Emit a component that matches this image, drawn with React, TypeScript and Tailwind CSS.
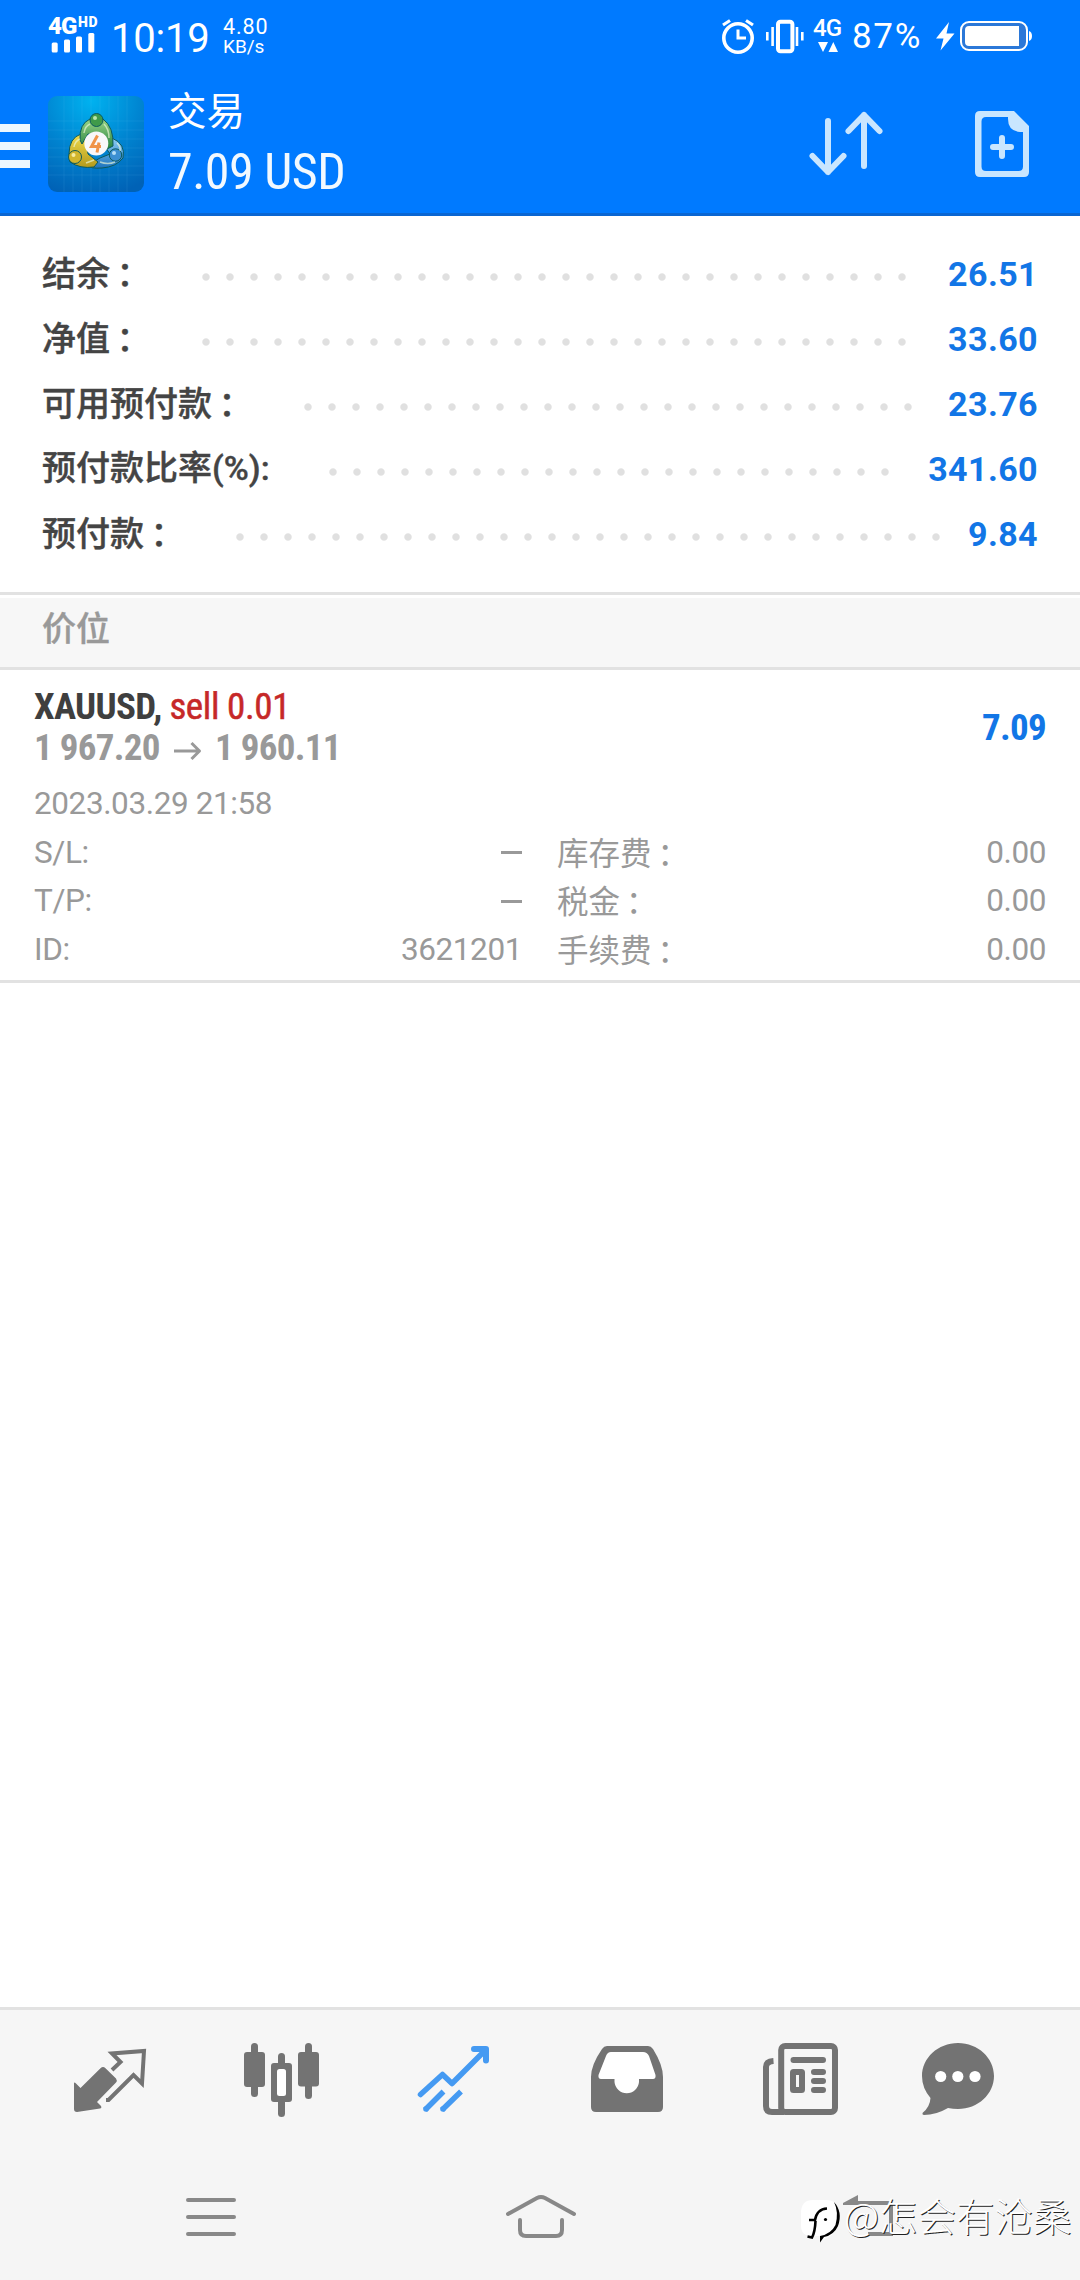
import React from "react";

const SANS = "font-['Roboto','Noto_Sans_CJK_SC',sans-serif]";
const COND = "font-['Roboto','Noto_Sans_CJK_SC',sans-serif] [font-stretch:75%]";

function Label({ text }: { text: string }) {
  const wide = text.endsWith("：");
  return (
    <>
      {wide ? text.slice(0, -1) : text}
      {wide && <span className="relative -left-[2px] top-[2px] font-['Noto_Sans_CJK_TC',sans-serif]">：</span>}
    </>
  );
}

function StatusBar() {
  return (
    <div className="flex h-[72px] items-start text-white">
      <div className="ml-[48px] mt-[13px] w-[54px]">
        <div className="flex h-[24px] items-start">
          <span className="w-[30px] text-[24px] font-black leading-[26px] tracking-[-1px]">4G</span>
          <span className="text-[14px] font-black leading-[18px] tracking-[0.6px]">HD</span>
        </div>
        <svg className="block -mt-[5px]" width="54" height="22" viewBox="48 32 54 22" fill="currentColor">
          <rect x="51.7" y="42.5" width="6" height="10" rx="1.5" />
          <rect x="64" y="39.5" width="6" height="13" rx="1.5" />
          <rect x="76" y="36.5" width="6" height="16" rx="1.5" />
          <rect x="88.3" y="33" width="6" height="19.5" rx="1.5" />
        </svg>
      </div>
      <div className="ml-[9px] mt-[14px] w-[112px] text-[40px] leading-[50px] tracking-[-0.2px]">10:19</div>
      <div className="mt-[16px] w-[60px]">
        <div className="text-[21.5px] leading-[21px] tracking-[0.9px]">4.80</div>
        <div className="text-[19px] leading-[20px]">KB/s</div>
      </div>
      <svg className="ml-auto mt-[14px]" width="86" height="44" viewBox="720 14 86 44" fill="none" stroke="currentColor">
        <circle cx="738" cy="38" r="14.2" strokeWidth="3.6" />
        <path d="M738 29.5V38H746" strokeWidth="3" />
        <path d="M723 25L730 20.5M753 25L746 20.5" strokeWidth="3.2" />
        <rect x="778" y="21.8" width="14.4" height="29.4" rx="2.5" strokeWidth="4" />
        <path d="M767.3 32V40.500M772.6 27V46M797 27V46M802.300 32V40.500" strokeWidth="2.600" />
      </svg>
      <div className="ml-[7px] mt-[18px] w-[34px]">
        <div className="text-[24px] font-medium leading-[20px] tracking-[-1px]">4G</div>
        <svg className="block" width="34" height="16" viewBox="813 38 34 16" fill="currentColor">
          <path d="M818 42H828L823 52ZM828.500 52H838L833.300 42Z" />
        </svg>
      </div>
      <div className="ml-[5px] mt-[16px] w-[82px] text-[35px] leading-[42px] tracking-[1.7px]">87%</div>
      <svg className="mr-[44px] mt-[14px]" width="102" height="44" viewBox="934 14 102 44">
        <path d="M949 22L936 38.500H943.500L940.500 50.500L954.500 33.500H946.500Z" fill="#fff" />
        <rect x="961" y="22" width="66" height="28" rx="8" fill="#2b78d8" stroke="#fff" strokeWidth="2" />
        <path d="M969 26H1019V46H969Q965 46 965 42V30Q965 26 969 26Z" fill="#fff" />
        <path d="M1029 31Q1032 32 1032 36T1029 41Z" fill="#fff" />
      </svg>
    </div>
  );
}

function Logo() {
  return (
    <svg className="ml-[18px]" width="96" height="96" viewBox="0 0 96 96">
      <defs>
        <radialGradient id="bg" cx="0.45" cy="0.05" r="1">
          <stop offset="0" stopColor="#00b2f0" />
          <stop offset="0.5" stopColor="#0086d2" />
          <stop offset="1" stopColor="#0062b6" />
        </radialGradient>
        <linearGradient id="gr" x1="0" y1="0" x2="0" y2="1">
          <stop offset="0" stopColor="#9ad486" />
          <stop offset="1" stopColor="#1f7f3c" />
        </linearGradient>
        <linearGradient id="ye" x1="0" y1="0" x2="0" y2="1">
          <stop offset="0" stopColor="#f0dc4e" />
          <stop offset="1" stopColor="#b39a1c" />
        </linearGradient>
        <linearGradient id="bl" x1="0" y1="0" x2="0" y2="1">
          <stop offset="0" stopColor="#8ccdf5" />
          <stop offset="1" stopColor="#1d74bd" />
        </linearGradient>
      </defs>
      <rect width="96" height="96" rx="9" fill="url(#bg)" />
      <path
        d="M16 0V96M25 0V96M34 0V96M43 0V96M52 0V96M61 0V96M70 0V96M79 0V96M0 25H96M0 34H96M0 43H96M0 52H96M0 61H96M0 70H96M0 79H96"
        stroke="#7fd4ff"
        strokeOpacity="0.12"
        strokeWidth="0.8"
      />
      <g stroke="#0b5a5d" strokeWidth="1">
        <path d="M40 69Q42 73 54 72Q68 71 75 62Q78 48 64 42L58 52L62 58L52 62Z" fill="url(#bl)" />
        <path d="M33 38Q21 42 21 58L22 66Q32 73 46 71L50 66L40 58L38 42Z" fill="url(#ye)" />
        <path d="M32 44Q31 28 42 23H55Q66 31 65 50L57 54L52 38H40L34 48Z" fill="url(#gr)" />
        <circle cx="48.500" cy="24" r="6.500" fill="#3f9a4a" />
        <circle cx="27" cy="61" r="6.500" fill="#d2b52c" />
        <circle cx="67.500" cy="59" r="6.200" fill="#3c8fd2" />
      </g>
      <path d="M36 37Q37 30 42 28M56 28Q61 33 61 42M26 51Q27 45 32 43M69 47Q73 51 72 55M46 64L38 67M52 66Q60 69 67 66" stroke="#eef9d8" strokeOpacity="0.65" strokeWidth="1.500" fill="none" />
      <circle cx="47" cy="22" r="2" fill="#b9e6ac" />
      <circle cx="25.500" cy="59" r="2" fill="#f8eca0" />
      <circle cx="66" cy="57" r="2" fill="#b5def8" />
      <circle cx="48.300" cy="47.500" r="12" fill="#f8f8fa" />
      <path d="M49.500 39.500L43.500 50.500H53M51 46.500L49 56.500" fill="none" stroke="#f0944a" strokeWidth="3" />
    </svg>
  );
}

function Header() {
  return (
    <div className="flex h-[144px] items-start border-b-[3px] border-[#0a66d2] pt-[24px] text-white">
      <svg className="mt-[28px]" width="30" height="44" viewBox="0 124 30 44" fill="#ecf7ff">
        <path d="M0 124H30V132H0ZM0 142H30V150H0ZM0 160H30V168H0Z" />
      </svg>
      <Logo />
      <div className="ml-[24px] -mt-[13px]">
        <div className="h-[59px] text-[38.5px] leading-[58px]">交易</div>
        <div className={`${COND} h-[60px] text-[50px] leading-[60px] tracking-[-0.5px] text-[#f2f9ff]`}>7.09 USD</div>
      </div>
      <svg className="ml-auto" width="84" height="84" viewBox="804 96 84 84" fill="none" stroke="#c9e6ff" strokeWidth="6" strokeLinecap="round" strokeLinejoin="round">
        <path d="M828 121V172M812.500 156L828 172L843.500 156" />
        <path d="M864 166V115M848.500 131L864 115L879.500 131" />
      </svg>
      <svg className="ml-[82px] mr-[40px]" width="70" height="84" viewBox="970 96 70 84">
        <path
          fill="#c9e6ff"
          fillRule="evenodd"
          d="M980 111H1014L1029 126V172Q1029 177 1024 177H980Q975 177 975 172V116Q975 111 980 111ZM1008 117H986Q981.500 117 981.500 121.500V166.500Q981.500 171 986 171H1018.500Q1023 171 1023 166.500V132H1020Q1008 131 1008 119Z"
        />
        <path d="M1002 138V156M993 147H1011" stroke="#c9e6ff" strokeWidth="6" strokeLinecap="round" />
      </svg>
    </div>
  );
}

const balances = [
  { label: "结余：", value: "26.51", lead: "w-[152px]", dots: "w-[720px]" },
  { label: "净值：", value: "33.60", lead: "w-[152px]", dots: "w-[720px]" },
  { label: "可用预付款：", value: "23.76", lead: "w-[254px]", dots: "w-[624px]" },
  { label: "预付款比率(%):", value: "341.60", lead: "w-[279px]", dots: "w-[576px]" },
  { label: "预付款：", value: "9.84", lead: "w-[186px]", dots: "w-[720px]" },
];

function Balances() {
  return (
    <div className="flex h-[376px] flex-col pl-[42px] pr-[42px] pt-[26px]">
      {balances.map((b) => (
        <div key={b.label} className="flex h-[65px] items-center text-[34px] leading-[65px]">
          <span className={`${b.lead} -mt-[3px] shrink-0 whitespace-nowrap font-medium text-[#444] [-webkit-text-stroke:0.4px_#444]`}>
            <Label text={b.label} />
          </span>
          <span
            className={`${b.dots} mt-[5px] h-[8px] shrink-0 bg-[radial-gradient(circle_at_center,#e0e0e0_3.2px,transparent_4.2px)] bg-[length:24px_8px]`}
          />
          <span className="ml-auto font-bold tracking-[0.4px] text-[#1276e6]">{b.value}</span>
        </div>
      ))}
    </div>
  );
}

const details = [
  ["S/L:", "–", "库存费：", "0.00"],
  ["T/P:", "–", "税金：", "0.00"],
  ["ID:", "3621201", "手续费：", "0.00"],
];

function Position() {
  return (
    <div className="h-[313px] border-b-[3px] border-[#e2e2e2] px-[34px] pt-[17px]">
      <div className={`${COND} flex items-center justify-between text-[37px] font-bold tracking-[-0.7px]`}>
        <div>
          <div className="h-[40px] leading-[40px] text-[#3f3f3f]">
            XAUUSD,{" "}
            <span className="font-normal tracking-[-0.4px] text-[#c62828] [-webkit-text-stroke:0.5px_#c62828]">sell 0.01</span>
          </div>
          <div className="flex h-[42px] items-center leading-[42px] text-[#999]">
            <span>1 967.20</span>
            <svg className="ml-[14px] mr-[13px] mt-[6px]" width="28" height="22" viewBox="0 0 28 22" fill="none" stroke="#999" strokeWidth="3" strokeLinejoin="round">
              <path d="M0 11H25.500M17.500 3L25.500 11L17.500 19" />
            </svg>
            <span>1 960.11</span>
          </div>
        </div>
        <div className="text-[#1276e6]">7.09</div>
      </div>
      <div className="text-[31.5px] tracking-[-0.4px] text-[#999]">
        <div className="mt-[10px] h-[49.500px] leading-[50px]">2023.03.29 21:58</div>
        {details.map(([a, b, c, d]) => (
          <div key={a} className="flex h-[48.500px] leading-[48.500px]">
            <span className="w-[243px]">{a}</span>
            <span className="flex w-[245px] items-center justify-end">
              {b === "–" ? <span className="h-[3px] w-[21px] bg-[#999]" /> : b}
            </span>
            <span className="-mt-[2px] ml-[35px] tracking-[0px]">
              <Label text={c} />
            </span>
            <span className="ml-auto">{d}</span>
          </div>
        ))}
      </div>
    </div>
  );
}

function TabBar() {
  return (
    <div className="flex h-[153px] items-start border-t-[3px] border-[#e2e2e2] bg-[#f6f6f6] pt-[30px] text-[#737373]">
      <svg className="ml-[70px]" width="80" height="80" viewBox="70 2040 80 80">
        <path fill="currentColor" d="M74 2083.500Q74 2081.500 76 2083.500L80.500 2088L100.500 2068.200Q103 2066 105.500 2068.200L116 2078.500Q117.500 2080.500 116 2082.500L97 2102L101 2106Q102 2108 100 2108.500L77 2112Q74 2112 74 2109Z" />
        <path fill="none" stroke="currentColor" strokeWidth="4" d="M112 2070L120.500 2062L112 2053.500L144 2051L142 2083.500L133.500 2075L108.500 2100H106" />
      </svg>
      <svg className="ml-[91px]" width="80" height="80" viewBox="241 2040 80 80" fill="currentColor">
        <rect x="251" y="2043" width="7" height="54" rx="3.500" />
        <rect x="244" y="2052" width="21" height="35" rx="3" />
        <rect x="305" y="2043" width="7" height="56" rx="3.500" />
        <rect x="298" y="2052" width="21" height="34.500" rx="3" />
        <rect x="278" y="2053" width="7" height="64" rx="3.500" />
        <rect x="271" y="2063" width="21" height="39" rx="3" />
        <rect x="277" y="2069" width="9" height="27" rx="2.500" fill="#fff" />
      </svg>
      <svg className="ml-[92px]" width="80" height="80" viewBox="413 2040 80 80" fill="none" stroke="#459af2" strokeLinejoin="round">
        <path strokeWidth="5.500" strokeLinecap="round" d="M420.500 2094.500L442.500 2074.500L452 2083.500L484 2051.500" />
        <path strokeWidth="6" strokeLinecap="round" d="M474 2049H486V2060.500" />
        <path fill="#459af2" stroke="none" d="M477 2049H487V2059Z" />
        <path strokeWidth="5.500" d="M425 2110L443.500 2091.500M442 2110L461 2091.500" />
        <circle cx="426" cy="2109" r="2.800" fill="#459af2" stroke="none" />
        <circle cx="443" cy="2109" r="2.800" fill="#459af2" stroke="none" />
      </svg>
      <svg className="ml-[94px]" width="80" height="80" viewBox="587 2040 80 80">
        <path fill="currentColor" d="M607 2046H648Q651 2046 653 2049Q663 2065 663 2077V2107Q663 2112 658 2112H596Q591 2112 591 2107V2077Q591 2065 602 2049Q604 2046 607 2046Z" />
        <path fill="#fff" d="M611 2052H643Q647 2052 649 2056L655.500 2075Q656 2079 653 2079H639V2082A12.300 12.300 0 0 1 614.500 2082V2079H601Q598 2079 598.500 2075L606 2056Q607.500 2052 611 2052Z" />
      </svg>
      <svg className="ml-[93px]" width="80" height="80" viewBox="760 2040 80 80" fill="none" stroke="currentColor">
        <rect x="781.200" y="2046" width="53.800" height="66" rx="4" strokeWidth="6" />
        <path strokeWidth="6" d="M773.500 2061Q766 2061.500 766 2067V2106Q766 2112 772 2112H784" />
        <path strokeWidth="6" strokeLinecap="round" d="M793.500 2060H823M814 2072H823M814 2081H823M814 2090H823" />
        <rect x="793" y="2072" width="9" height="18" rx="0.500" strokeWidth="6" />
      </svg>
      <svg className="ml-[78px]" width="80" height="80" viewBox="918 2040 80 80">
        <path fill="currentColor" d="M958 2043C978 2043 994 2058 994 2076S978 2109 958 2109Q953 2109 948 2108Q936 2115 924 2115Q922 2115 922.500 2113Q930 2107 930.500 2098Q922 2088 922 2076C922 2058 938 2043 958 2043Z" />
        <g fill="#fff">
          <circle cx="940.700" cy="2076.500" r="5.600" />
          <circle cx="957.800" cy="2076.500" r="5.600" />
          <circle cx="975" cy="2076.500" r="5.600" />
        </g>
      </svg>
    </div>
  );
}

function NavBar() {
  return (
    <div className="relative flex h-[120px] items-start bg-[#f5f5f5] pt-[30px]">
      <svg className="ml-[180px]" width="62" height="60" viewBox="180 2190 62 60" stroke="#888" strokeWidth="4" strokeLinecap="round">
        <path d="M188 2200H234M188 2217H234M188 2234H234" />
      </svg>
      <svg className="ml-[258px]" width="82" height="60" viewBox="500 2190 82 60" fill="none" stroke="#888" strokeWidth="4" strokeLinecap="round">
        <path d="M508 2214L537 2198Q541 2196 545 2198L574 2214M520 2220V2230Q520 2236 526 2236H556Q562 2236 562 2230V2220" />
      </svg>
      <svg className="ml-[258px]" width="60" height="60" viewBox="840 2190 60 60">
        <path fill="#888" d="M843 2203L858 2195V2201H888Q893 2201 893 2206V2236H868V2232H889V2205H843Z" />
      </svg>
      <div className="absolute left-[800px] top-[34px] flex items-start text-white">
        <svg width="44" height="54" viewBox="800 2194 44 54">
          <path fill="#fff" d="M813 2200H826Q838 2200 838 2213V2222Q838 2234 821 2241V2236H812Q801 2236 801 2226V2213Q801 2200 813 2200Z" />
          <path fill="none" stroke="#000" strokeWidth="2.600" d="M809 2220H815Q817 2209 827 2208.500M815.500 2221Q815 2232 812 2237.500L807.500 2236.500" />
          <path fill="#000" d="M834 2202Q843 2212 838 2226Q834 2235 824 2237L820 2242.500V2236Q831 2234 835.500 2225Q839 2212 834 2202Z" />
          <circle cx="825.500" cy="2219.500" r="1.600" fill="#000" />
        </svg>
        <span className="-mt-[2px] whitespace-nowrap font-['Noto_Sans_CJK_SC',sans-serif] text-[38.500px] font-light leading-[44px] [text-shadow:1px_1px_0_#222]">
          @怎会有沧桑
        </span>
      </div>
    </div>
  );
}

export default function App() {
  return (
    <div className={`${SANS} flex h-[2280px] w-[1080px] flex-col overflow-hidden bg-white`}>
      <div className="bg-[#007aff]">
        <StatusBar />
        <Header />
      </div>
      <Balances />
      <div className="h-[78px] border-y-[3px] border-[#e2e2e2] bg-[#f7f7f7]">
        <div className="h-[66px] border-t-[3px] border-white pl-[42px] text-[34px] font-medium leading-[62px] text-[#999] [-webkit-text-stroke:0.4px_#999]">价位</div>
      </div>
      <Position />
      <div className="flex-1" />
      <TabBar />
      <NavBar />
    </div>
  );
}
